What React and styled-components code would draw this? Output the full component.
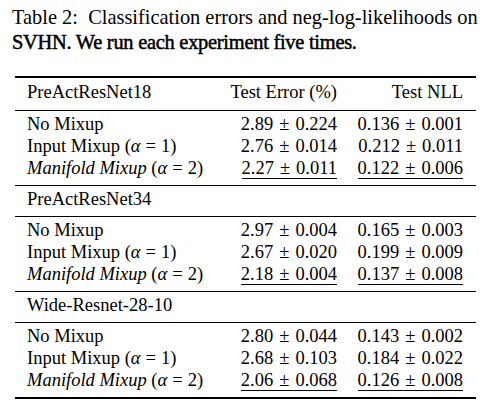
import React from 'react';
import styled, { createGlobalStyle } from 'styled-components';

const GlobalStyle = createGlobalStyle`
  html, body {
    margin: 0;
    padding: 0;
    background: #fff;
  }
  body {
    font-family: "Liberation Serif", "Times New Roman", serif;
    color: #000;
  }
`

const Page = styled.div`
  width: 486px;
  height: 403px;
  overflow: hidden;
  padding: 5px 10px 0 15px;
  box-sizing: border-box;
`

const Caption = styled.div`
  font-size: 20.4px;
  line-height: 25px;
  margin-left: -3px;
  white-space: nowrap;
`

const Strong = styled.span`
  -webkit-text-stroke: 0.5px #000;
  letter-spacing: -0.25px;
`

const Table = styled.div`
  margin-top: 21px;
  border-top: 2px solid #000;
  border-bottom: 2px solid #000;
  font-size: 18.5px;
`

const Row = styled.div`
  display: grid;
  grid-template-columns: 1fr 120px 126px;
  padding: 0 13px 0 12px;
  line-height: 22px;
  white-space: nowrap;
`

const HeadBlock = styled.div`
  padding: ${p => p.$top}px 0 ${p => p.$bottom}px;
  border-bottom: 1.5px solid #000;
`

const Group = styled.div`
  padding: 2px 0 6px;
  border-bottom: ${p => (p.$last ? 'none' : '1.5px solid #000')};
`

const Num = styled.span`
  text-align: right;
`

const Figure = styled.span`
  display: inline-block;
  line-height: 19px;
  border-bottom: 1px solid ${p => (p.$best ? '#000' : 'transparent')};
`

const Op = styled.span`
  padding: 0 ${p => p.$gap || 5}px;
`

const Greek = styled.i`
  font-style: italic;
`

const groups = [
  {
    name: 'PreActResNet18',
    rows: [
      ['2.89', '0.224', '0.136', '0.001'],
      ['2.76', '0.014', '0.212', '0.011'],
      ['2.27', '0.011', '0.122', '0.006'],
    ],
  },
  {
    name: 'PreActResNet34',
    rows: [
      ['2.97', '0.004', '0.165', '0.003'],
      ['2.67', '0.020', '0.199', '0.009'],
      ['2.18', '0.004', '0.137', '0.008'],
    ],
  },
  {
    name: 'Wide-Resnet-28-10',
    rows: [
      ['2.80', '0.044', '0.143', '0.002'],
      ['2.68', '0.103', '0.184', '0.022'],
      ['2.06', '0.068', '0.126', '0.008'],
    ],
  },
]

const labels = [
  <>No Mixup</>,
  <>Input Mixup (<Greek>α</Greek><Op>=</Op>1)</>,
  <><i>Manifold Mixup</i> (<Greek>α</Greek><Op>=</Op>2)</>,
]

function Value({ a, b, best }) {
  return (
    <Num>
      <Figure $best={best}>{a}<Op $gap={6}>±</Op>{b}</Figure>
    </Num>
  )
}

function App() {
  return (
    <>
      <GlobalStyle />
      <Page>
        <Caption>
          Table 2:&nbsp; Classification errors and neg-log-likelihoods on<br />
          <Strong>SVHN. We run each experiment five times.</Strong>
        </Caption>
        <Table>
          {groups.map((g, gi) => (
            <React.Fragment key={g.name}>
              <HeadBlock $top={gi === 0 ? 3 : 2} $bottom={gi === 0 ? 7 : 6}>
                <Row>
                  <span>{g.name}</span>
                  {gi === 0 ? (
                    <>
                      <Num>Test Error (%)</Num>
                      <Num>Test NLL</Num>
                    </>
                  ) : (
                    <>
                      <span />
                      <span />
                    </>
                  )}
                </Row>
              </HeadBlock>
              <Group $last={gi === groups.length - 1}>
                {g.rows.map((r, ri) => (
                  <Row key={ri}>
                    <span>{labels[ri]}</span>
                    <Value a={r[0]} b={r[1]} best={ri === 2} />
                    <Value a={r[2]} b={r[3]} best={ri === 2} />
                  </Row>
                ))}
              </Group>
            </React.Fragment>
          ))}
        </Table>
      </Page>
    </>
  )
}

export default App;
